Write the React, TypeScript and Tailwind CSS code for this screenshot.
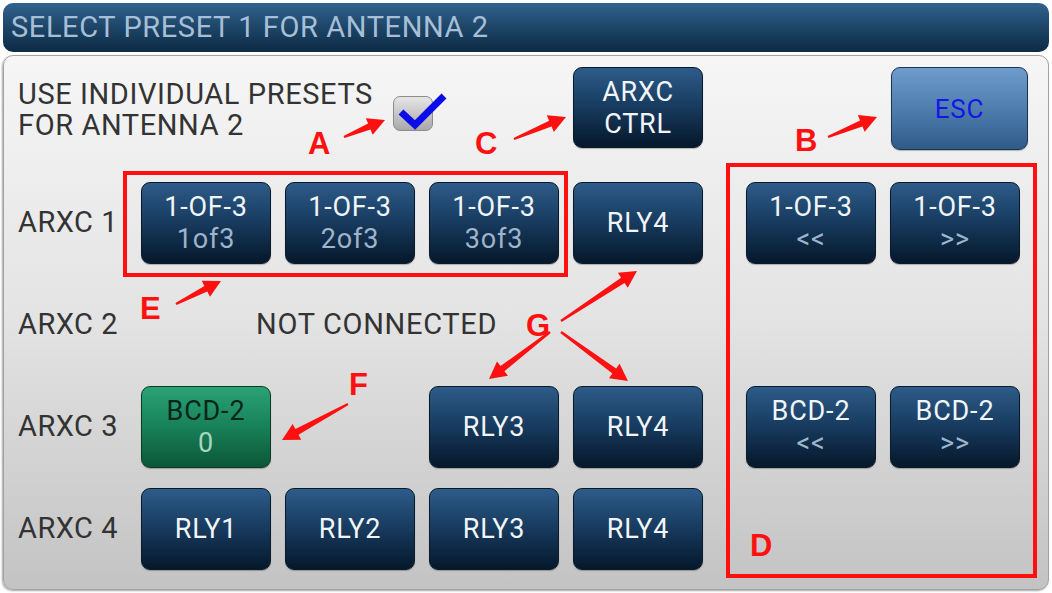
import React from 'react';

type BtnProps = {
  top: string;
  bottom?: string;
  variant?: 'blue' | 'green' | 'esc';
  whiteBottom?: boolean;
  className?: string;
};

function PanelButton({ top, bottom, variant = 'blue', whiteBottom = false, className = '' }: BtnProps) {
  const base =
    'flex flex-col items-center justify-center rounded-[9px] border-[1.5px] text-[27px] leading-[32px] tracking-[0.8px] shadow-[0_1px_1px_rgba(0,0,0,0.25)]';
  if (variant === 'green') {
    return (
      <div
        className={`${base} border-[#0b3b26] bg-gradient-to-b from-[#2aa275] via-[#188159] to-[#0b5738] ${className}`}
      >
        <span className="text-[#07251a]">{top}</span>
        {bottom && <span className="text-[#a6d6bf]">{bottom}</span>}
      </div>
    );
  }
  if (variant === 'esc') {
    return (
      <div
        className={`${base} border-[#1b354f] bg-gradient-to-b from-[#6e9ccc] via-[#4f7eae] to-[#2f5b89] ${className}`}
      >
        <span className="text-[26px] text-[#1515e8]">{top}</span>
      </div>
    );
  }
  return (
    <div
      className={`${base} border-[#0a1a2b] bg-gradient-to-b from-[#2d5c89] via-[#173a5e] to-[#06182b] ${className}`}
    >
      <span className="text-[#f2f5f8]">{top}</span>
      {bottom && <span className={whiteBottom ? 'text-[#f2f5f8]' : 'text-[#9db4ca]'}>{bottom}</span>}
    </div>
  );
}

function Label({ children }: { children: React.ReactNode }) {
  return <div className="self-center text-[29px] tracking-[0.5px] text-[#333333]">{children}</div>;
}

// tapered red annotation arrow, tail -> tip
function arrowPoints(x1: number, y1: number, x2: number, y2: number) {
  const dx = x2 - x1;
  const dy = y2 - y1;
  const len = Math.hypot(dx, dy);
  const ux = dx / len;
  const uy = dy / len;
  const px = -uy;
  const py = ux;
  const hl = 17;
  const hw = 9;
  const bx = x2 - ux * hl;
  const by = y2 - uy * hl;
  const pts: [number, number][] = [
    [x1 + px * 1.2, y1 + py * 1.2],
    [bx + px * 3.2, by + py * 3.2],
    [bx + px * hw, by + py * hw],
    [x2, y2],
    [bx - px * hw, by - py * hw],
    [bx - px * 3.2, by - py * 3.2],
    [x1 - px * 1.2, y1 - py * 1.2],
  ];
  return pts.map((p) => p.join(',')).join(' ');
}

const arrows: [number, number, number, number][] = [
  [344, 137, 385, 120],
  [514, 139, 566, 117],
  [828, 137, 877, 117],
  [176, 304, 221, 281],
  [561, 321, 637, 271],
  [550, 332, 489, 379],
  [561, 332, 628, 381],
  [348, 404, 282, 440],
];

const letters: { ch: string; x: number; y: number }[] = [
  { ch: 'A', x: 308, y: 128 },
  { ch: 'C', x: 475, y: 128 },
  { ch: 'B', x: 795, y: 125 },
  { ch: 'E', x: 140, y: 293 },
  { ch: 'G', x: 526, y: 310 },
  { ch: 'F', x: 349, y: 369 },
  { ch: 'D', x: 750, y: 530 },
];

export default function App() {
  return (
    <div className="relative h-[593px] w-[1052px] overflow-hidden bg-white font-[Roboto,sans-serif]">
      {/* title bar */}
      <div className="mx-[3px] mt-[3px] flex h-[49px] items-center rounded-[10px] bg-gradient-to-b from-[#31638f] via-[#1d4568] to-[#0e2a44] pl-[8px]">
        <span className="text-[29px] tracking-[0.6px] text-[#a6bfd6]">SELECT PRESET 1 FOR ANTENNA 2</span>
      </div>

      {/* main panel */}
      <div className="mx-[3px] mt-[3px] h-[535px] rounded-[10px] border border-[#a3a3a3] bg-gradient-to-b from-[#f6f6f6] via-[#e3e3e3] to-[#c3c3c3] pl-[14px] pt-[11px] shadow-[-1px_1px_2px_rgba(0,0,0,0.35)]">
        <div className="grid grid-cols-[109px_130px_130px_130px_130px_15px_130px_130px] grid-rows-[95px_82px_82px_82px_82px] gap-x-[14px] gap-y-[20px]">
          {/* header row */}
          <div className="col-span-4 flex items-start">
            <div className="mt-[12px] w-[375px] shrink-0 text-[29px] leading-[31px] tracking-[0.6px] text-[#333333]">
              USE INDIVIDUAL PRESETS
              <br />
              FOR ANTENNA 2
            </div>
            <div className="relative mt-[29px] h-[35px] w-[40px] shrink-0 rounded-[7px] border-[1.5px] border-[#8c8c8c] bg-gradient-to-b from-[#e6e6e6] to-[#a9a9a9]">
              <svg className="absolute left-0 top-0 overflow-visible" width="40" height="35">
                <path d="M7 15 L21 28 L50 -1" fill="none" stroke="#0c0ce8" strokeWidth="7" strokeLinejoin="miter" />
              </svg>
            </div>
          </div>
          <PanelButton top="ARXC" bottom="CTRL" whiteBottom className="col-start-5 h-[81px]" />
          <PanelButton top="ESC" variant="esc" className="col-start-7 col-span-2 ml-[145px] h-[83px] w-[137px]" />

          {/* ARXC 1 */}
          <Label>ARXC 1</Label>
          <PanelButton top="1-OF-3" bottom="1of3" />
          <PanelButton top="1-OF-3" bottom="2of3" />
          <PanelButton top="1-OF-3" bottom="3of3" />
          <PanelButton top="RLY4" />
          <div />
          <PanelButton top="1-OF-3" bottom="<<" />
          <PanelButton top="1-OF-3" bottom=">>" />

          {/* ARXC 2 */}
          <Label>ARXC 2</Label>
          <div className="col-span-4 self-center pl-[115px] text-[29px] tracking-[0.7px] text-[#333333]">
            NOT CONNECTED
          </div>
          <div className="col-span-3" />

          {/* ARXC 3 */}
          <Label>ARXC 3</Label>
          <PanelButton top="BCD-2" bottom="0" variant="green" />
          <div />
          <PanelButton top="RLY3" />
          <PanelButton top="RLY4" />
          <div />
          <PanelButton top="BCD-2" bottom="<<" />
          <PanelButton top="BCD-2" bottom=">>" />

          {/* ARXC 4 */}
          <Label>ARXC 4</Label>
          <PanelButton top="RLY1" />
          <PanelButton top="RLY2" />
          <PanelButton top="RLY3" />
          <PanelButton top="RLY4" />
        </div>
      </div>

      {/* red annotations overlay */}
      <svg className="pointer-events-none absolute left-0 top-0" width="1052" height="593">
        <rect x="125" y="173" width="441" height="102" fill="none" stroke="#ff1010" strokeWidth="4" />
        <rect x="728" y="165" width="307" height="411" fill="none" stroke="#ff1010" strokeWidth="4" />
        {arrows.map((a, i) => (
          <polygon key={i} points={arrowPoints(a[0], a[1], a[2], a[3])} fill="#ff1010" />
        ))}
      </svg>
      {letters.map((l) => (
        <span
          key={l.ch}
          className="pointer-events-none absolute font-['Liberation_Sans',sans-serif] text-[31px] font-bold leading-none text-[#ff1010]"
          style={{ left: l.x, top: l.y }}
        >
          {l.ch}
        </span>
      ))}
    </div>
  );
}
